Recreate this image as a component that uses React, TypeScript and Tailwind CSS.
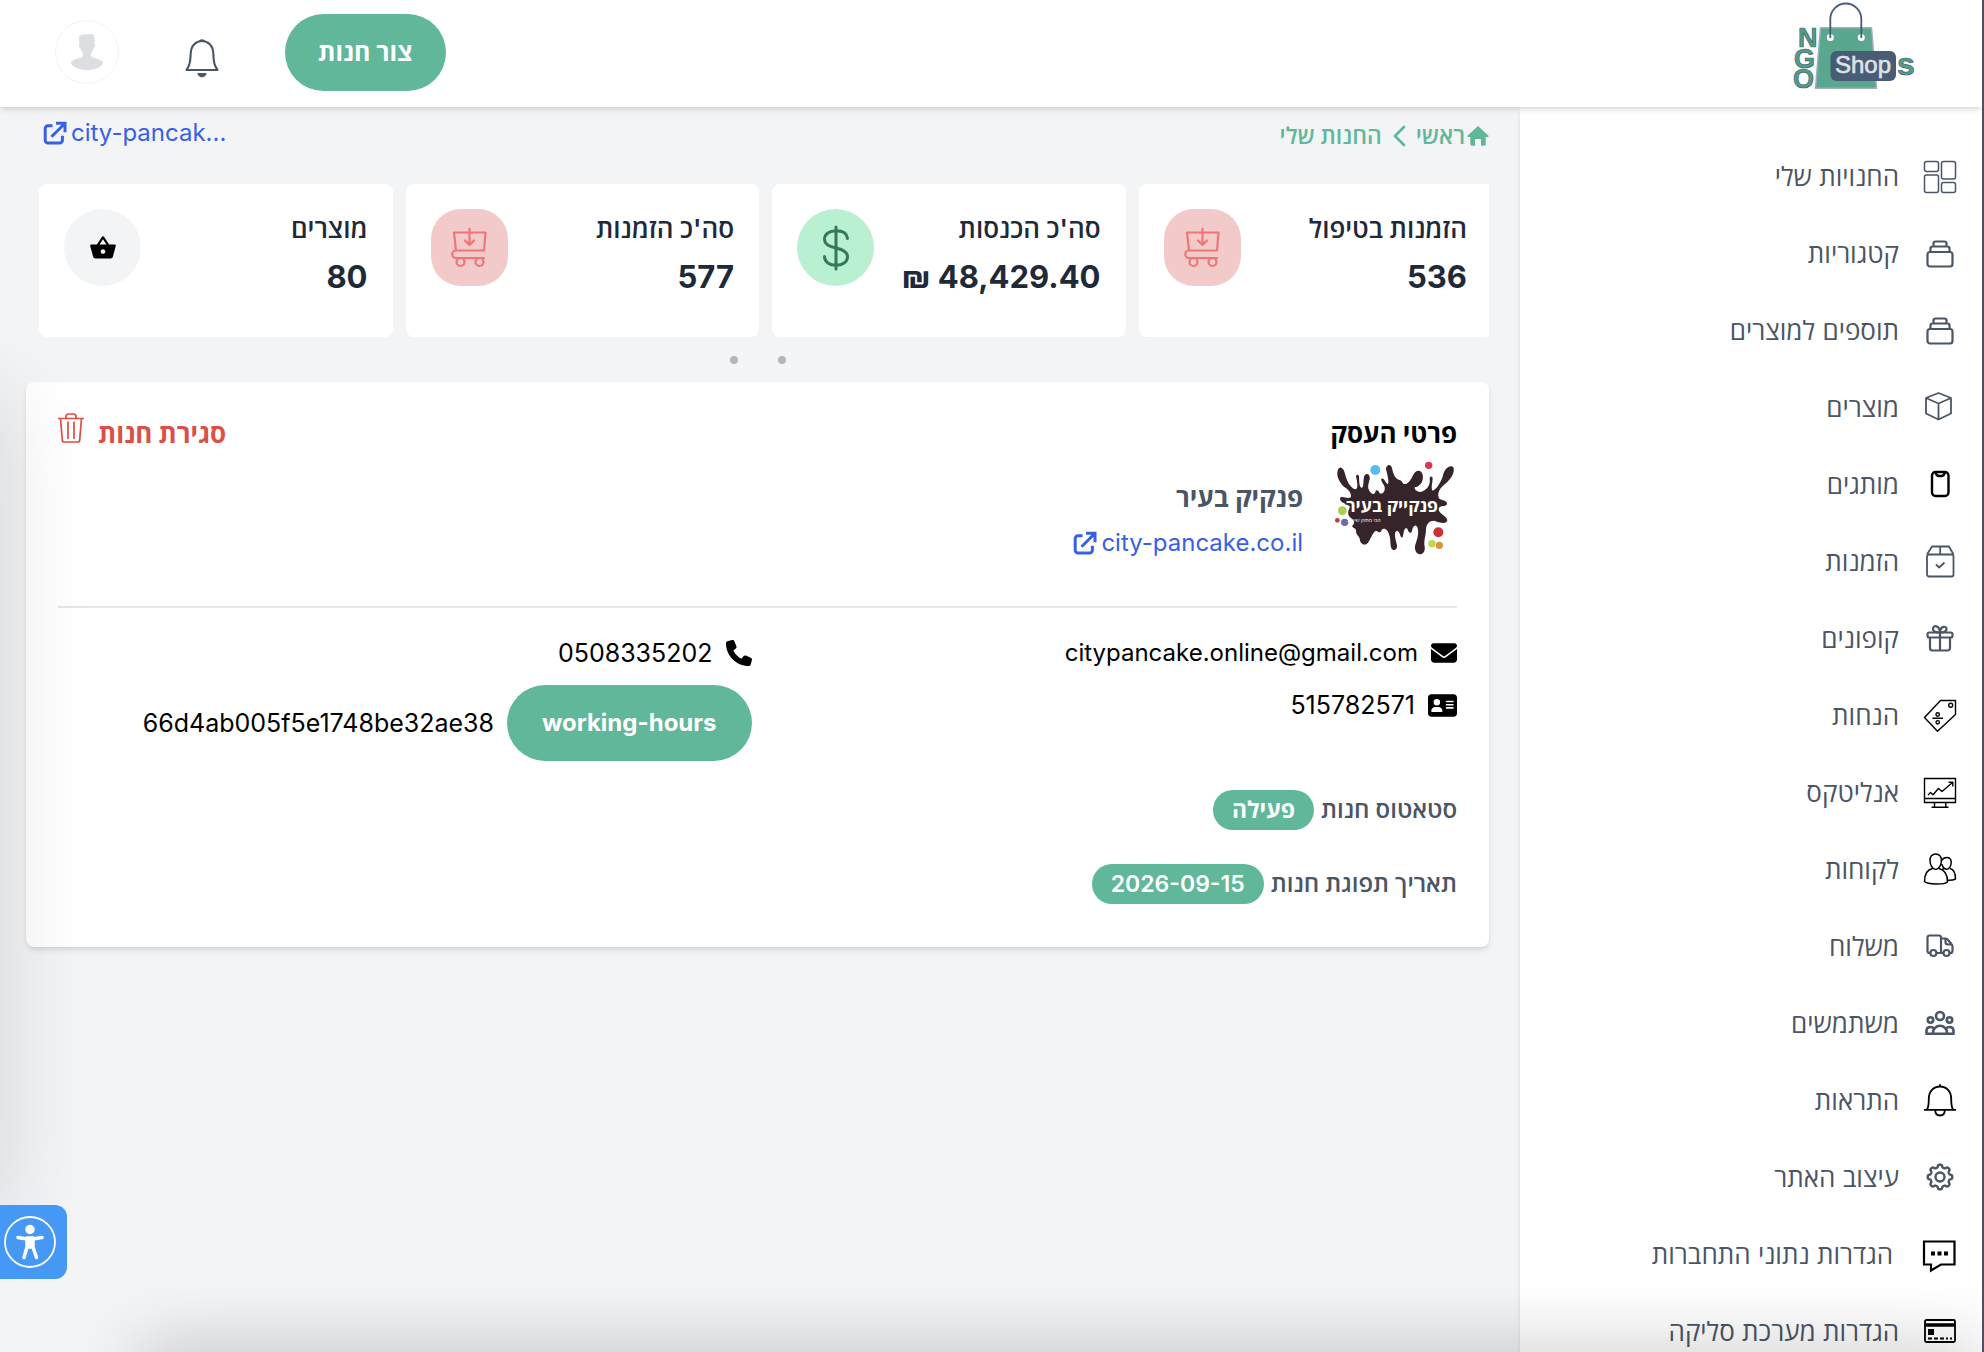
import type { ReactNode } from "react";
import { FaAddressCard, FaEnvelope, FaPhone } from "react-icons/fa6";
import { MdShoppingBasket } from "react-icons/md";

type IconProps = { children: ReactNode; tone?: string; weight?: number };

function Icon({ children, tone = "text-gray-600", weight = 2.2 }: IconProps) {
  return (
    <svg
      viewBox="0 0 32 32"
      className={`size-8 shrink-0 overflow-visible ${tone}`}
      fill="none"
      stroke="currentColor"
      strokeWidth={weight}
      strokeLinejoin="round"
      aria-hidden="true"
    >
      {children}
    </svg>
  );
}

const gearPath = (() => {
  const points: string[] = [];
  for (let i = 0; i <= 160; i++) {
    const a = (i / 160) * Math.PI * 2;
    const wave = Math.tanh(2.2 * Math.cos(8 * a));
    const r = 11 + 1.3 * wave;
    points.push(`${(16 + r * Math.sin(a)).toFixed(2)} ${(15 - r * Math.cos(a)).toFixed(2)}`);
  }
  return `M${points.join("L")}Z`;
})();

const Collection = () => (
  <Icon>
    <path d="M9.500 8V5.500a2 2 0 0 1 2-2h9a2 2 0 0 1 2 2V8M6.500 14v-3.500a2 2 0 0 1 2-2h15a2 2 0 0 1 2 2V14" />
    <rect x="3.500" y="14" width="25" height="14.500" rx="2.500" />
  </Icon>
);

const menu: { label: string; icon: ReactNode; inset?: boolean }[] = [
  {
    label: "החנויות שלי",
    icon: (
      <Icon weight={1.5}>
        <rect x=".5" y=".5" width="14" height="10" rx="2" />
        <rect x=".5" y="14" width="14" height="17.500" rx="2" />
        <rect x="17.500" y=".5" width="14" height="17.500" rx="2" />
        <rect x="17.500" y="21.500" width="14" height="10" rx="2" />
      </Icon>
    ),
  },
  { label: "קטגוריות", icon: <Collection /> },
  { label: "תוספים למוצרים", icon: <Collection /> },
  {
    label: "מוצרים",
    icon: (
      <Icon weight={1.8}>
        <path d="M14.500 1 27 6v15.500L14.500 27.500 2 21.500V6ZM2 6l12.500 5.500L27 6M14.500 11.500v16" />
      </Icon>
    ),
  },
  {
    label: "מותגים",
    icon: (
      <Icon tone="text-black" weight={2.4}>
        <rect x="8" y="3" width="16.500" height="24" rx="3.500" />
        <path d="M11.500 3c.5 2.800 1.500 4 3.500 4h2.500c2 0 3-1.200 3.500-4" />
      </Icon>
    ),
  },
  {
    label: "הזמנות",
    icon: (
      <Icon weight={1.8}>
        <path d="M3 8.500 8 .5h17l4.500 8M16.200 .5v8" />
        <rect x="3" y="8.500" width="26.500" height="22" rx="2" />
        <path d="m12 18.500 3.200 3 5.300-5" />
      </Icon>
    ),
  },
  {
    label: "קופונים",
    icon: (
      <Icon>
        <rect x="3.500" y="9.500" width="25" height="5" rx="1.800" />
        <path d="M6 14.500v10.500a2.500 2.500 0 0 0 2.500 2.500h15a2.500 2.500 0 0 0 2.500-2.500V14.500M16 9.500v18M16 9.500c-5 0-7-1.500-7-3.800 0-3.600 6.500-4 7 3.800Zm0 0c5 0 6.500-1.300 6.500-3.500 0-3.400-6-3.400-6.500 3.500Z" />
      </Icon>
    ),
  },
  {
    label: "הנחות",
    icon: (
      <Icon tone="text-black" weight={1.4}>
        <path d="M31.500 .5h-15L.5 17.500 13.500 31.300 31.500 14.500ZM8.500 18.300H19" />
        <circle cx="26.700" cy="5.300" r="2" />
        <circle cx="13.700" cy="14.500" r="1.700" />
        <circle cx="13.700" cy="22.300" r="1.700" />
      </Icon>
    ),
  },
  {
    label: "אנליטקס",
    icon: (
      <Icon tone="text-black" weight={1.4}>
        <path d="M.5 1.500h31v24H.5ZM.5 21.500h31M10.500 25.500V30M21.800 25.500V30M7.500 30.300h17" />
        <path d="m4 18 2.500-2.500 2.500 2.300 5.500-6.300 3.500 3L28.500 5.500M24.500 5.200h4.300v4.300" />
      </Icon>
    ),
  },
  {
    label: "לקוחות",
    icon: (
      <Icon tone="text-black" weight={1.5}>
        <path d="M11.700 0c3.600 0 5.800 2.600 5.700 6.500-.1 4.400-2.400 9-5.700 9S6.100 10.900 6 6.500C5.900 2.600 8.100 0 11.700 0ZM8.500 14.500C4 15.500.5 18.500.5 27.500c3 3 19.500 3.500 23 .5 0-8.500-3-12.300-8.500-13.500M17.800 6.500c1-2 2.800-3 5-3 2.800 0 4.400 2 4.400 4.800 0 3.800-2 7-4.400 7-2 0-4-2-4.900-5M19.500 14.500l-1.500 1.500M26 14.500c3.500.8 5.500 3.500 5.500 10.500-2 1.200-5 1.500-8.500 1.300" />
      </Icon>
    ),
  },
  {
    label: "משלוח",
    icon: (
      <Icon>
        <path d="M6.200 22H5.500a2 2 0 0 1-2-2V6.500a2 2 0 0 1 2-2H15a2 2 0 0 1 2 2V22h-4.500M17 7.500h4.500a3 3 0 0 1 2.400 1.200l3.800 4.800a3 3 0 0 1 .8 2V20a2 2 0 0 1-2 2H26M17 22h2.200M21.500 8v3a2.500 2.500 0 0 0 2.500 2.500h4" />
        <circle cx="9.400" cy="22" r="3" />
        <circle cx="22.500" cy="22" r="3" />
      </Icon>
    ),
  },
  {
    label: "משתמשים",
    icon: (
      <Icon weight={2.6}>
        <circle cx="16" cy="8" r="4" />
        <circle cx="6.500" cy="12" r="2.700" />
        <circle cx="25.500" cy="12" r="2.700" />
        <path d="M9 25.800v-1c0-4 3-7 7-7s7 3 7 7v1ZM9 25.800H2.500V23c0-2.600 1.600-4 4-4 1.500 0 2.500.5 3.300 1.200M23 25.800h6.500V23c0-2.600-1.600-4-4-4-1.500 0-2.500.5-3.300 1.200" />
      </Icon>
    ),
  },
  {
    label: "התראות",
    icon: (
      <Icon tone="text-black" weight={1.8}>
        <path d="M0 24.800h32M3 24.500c1.500-2 1.800-5 1.800-11C4.800 6.500 9.500 1.500 16 1.500S27.200 6.500 27.200 13.500c0 6 .3 9 1.800 11M16 1.500V-.8M11.200 25c0 3.500 2 5.500 4.800 5.500s4.800-2 4.800-5.500" />
      </Icon>
    ),
  },
  {
    label: "עיצוב האתר",
    icon: (
      <Icon weight={2.4}>
        <path d={gearPath} />
        <circle cx="16" cy="15" r="4.500" />
      </Icon>
    ),
  },
  {
    label: "הגדרות נתוני התחברות",
    inset: true,
    icon: (
      <Icon tone="text-black" weight={2.2}>
        <path d="M0 2.500h30.500v23H17L7 31.500v-6H0Z" strokeLinejoin="miter" />
        <path d="M7 14.500h4M13.500 14.500h4M20 14.500h4" strokeWidth="4" />
      </Icon>
    ),
  },
  {
    label: "הגדרות מערכת סליקה",
    icon: (
      <Icon tone="text-black" weight={1.8}>
        <rect x="1" y="4" width="30" height="22" rx="1.500" />
        <path d="M1 9h30" strokeWidth="3.500" />
        <path d="M4 16h6" strokeWidth="6" />
        <path d="M4 22.500h4M10 22.500h4M16 22.500h4M22 22.500h2M26 22.500h2" />
      </Icon>
    ),
  },
];

const ExternalLink = () => (
  <svg viewBox="0 0 24 24" className="size-6 shrink-0" fill="none" stroke="currentColor" strokeWidth="3" aria-hidden="true">
    <path d="M9.500 4.800H5a2.800 2.800 0 0 0-2.800 2.800v11.600A2.800 2.800 0 0 0 5 22h11.600a2.800 2.800 0 0 0 2.800-2.800v-4.500" strokeLinejoin="round" />
    <path d="M13 2.200h9v9M21.500 2.700 8.500 15.700" />
  </svg>
);

const CartIcon = () => (
  <svg viewBox="0 0 36 40" className="h-10 w-9 text-[#f07575]" fill="none" stroke="currentColor" strokeWidth="2.200" strokeLinejoin="round" strokeLinecap="round" aria-hidden="true">
    <path d="M3 4.500h31.500l-1.500 18H5L3 4.500M18.500 1v15M14 12.500l4.500 4.500 4.500-4.500M33 22.500H5a3.500 3.500 0 0 0 0 7.500h28" />
    <circle cx="9.500" cy="34" r="4" />
    <circle cx="28.500" cy="34" r="4" />
  </svg>
);

const DollarIcon = () => (
  <svg viewBox="0 0 28 46" className="h-12 w-7 text-[#35795d]" fill="none" stroke="currentColor" strokeWidth="3" strokeLinecap="round" aria-hidden="true">
    <path d="M14 2v42M25.500 13.500C25 8.500 20.500 5.800 14 5.800S2.500 9 2.500 14.500c0 4.500 3.500 6.800 11.500 8.500s11.500 4 11.500 8.700c0 5.300-5 8.500-11.500 8.500S2.500 37 2.500 31.500" />
  </svg>
);

const stats = [
  { label: "הזמנות בטיפול", value: "536", badge: "rounded-[30px] bg-[#f3caca]", icon: <CartIcon /> },
  { label: "סה'כ הכנסות", value: "48,429.40 ₪", badge: "rounded-full bg-[#b9f0d2]", icon: <DollarIcon /> },
  { label: "סה'כ הזמנות", value: "577", badge: "rounded-[30px] bg-[#f3caca]", icon: <CartIcon /> },
  { label: "מוצרים", value: "80", badge: "rounded-full bg-gray-100", icon: <MdShoppingBasket className="size-7 text-black" /> },
];

function BrandLogo() {
  return (
    <svg viewBox="0 0 124 92" className="h-[92px] w-[124px]" role="img" aria-label="NGO Shops">
      <path d="M28.500 27.700h51l5 60.500H23.500Z" fill="#5aa78f" stroke="#9fb0b8" strokeWidth="1.500" strokeLinejoin="round" />
      <circle cx="38.300" cy="37.500" r="3.500" fill="#fff" />
      <circle cx="69.300" cy="37.500" r="3.500" fill="#fff" />
      <path d="M38.300 38V19a15.500 15.500 0 0 1 31 0V38" fill="none" stroke="#485c75" strokeWidth="1.800" />
      <g fontFamily="Liberation Sans, sans-serif" fontWeight="700" fontSize="27" fill="#4f9f82" stroke="#485c75" strokeWidth=".7" direction="ltr">
        <text x="6" y="47">N</text>
        <text x="2" y="68">G</text>
        <text x="1" y="88">O</text>
        <text x="105" y="75" fontSize="32">s</text>
      </g>
      <rect x="38.500" y="51" width="65.500" height="30" rx="6" fill="#485c75" />
      <text x="43" y="73" direction="ltr" fontFamily="Liberation Sans, sans-serif" fontSize="24" fill="#dfe3e6" stroke="#dfe3e6" strokeWidth=".6">Shop</text>
    </svg>
  );
}

function StoreLogo() {
  return (
    <svg viewBox="885 180 366 288" className="h-24 w-[122px]" role="img" aria-label="פנקייק בעיר">
      <path
        fill="#35252a"
        d="M893 212C898 194 912 202 916 225C921 248 936 268 948 268C956 262 950 240 948 228C950 222 957 223 957 230C958 245 957 262 966 263C973 260 968 232 975 224C984 218 991 226 989 238C986 252 981 262 988 272C994 282 1003 286 1006 276C1008 268 1014 270 1018 278C1026 286 1036 274 1034 262C1032 252 1021 244 1024 236C1031 232 1036 246 1042 252C1050 250 1041 222 1038 206C1040 192 1053 192 1056 204C1060 226 1068 238 1078 240C1088 240 1086 254 1096 252C1106 250 1112 240 1118 228C1126 208 1144 208 1148 224C1152 246 1138 260 1124 262C1122 270 1136 280 1148 274C1162 268 1172 254 1169 236C1170 226 1178 228 1178 236C1177 252 1172 266 1178 272C1192 268 1206 240 1210 222C1216 200 1236 192 1241 204C1244 222 1230 240 1212 254C1196 268 1190 284 1198 296C1206 302 1222 300 1221 312C1218 322 1200 314 1196 326C1194 340 1220 348 1222 360C1220 376 1196 366 1182 362C1168 362 1158 372 1158 390C1158 408 1150 420 1154 440C1156 456 1148 463 1139 463C1128 462 1122 448 1126 434C1132 416 1138 400 1132 382C1126 370 1118 380 1116 392C1112 404 1106 398 1102 386C1092 380 1092 396 1088 412C1080 416 1082 396 1072 392C1062 394 1064 410 1070 432C1074 446 1066 452 1060 450C1048 446 1054 424 1048 406C1044 388 1030 380 1024 392C1020 402 1014 394 1008 392C998 396 994 414 984 428C976 438 964 434 960 422C960 408 950 408 948 396C950 384 940 386 936 378C946 370 944 362 930 352C920 342 926 330 930 320C924 310 900 310 900 296C904 284 922 300 932 292C936 280 926 270 914 262C900 250 888 230 893 212Z"
      />
      <circle cx="1006" cy="210" r="15" fill="#55bdf0" />
      <circle cx="1166" cy="196" r="11" fill="#dc3550" />
      <circle cx="907" cy="332" r="13" fill="#a8cf4c" />
      <circle cx="892" cy="361" r="7" fill="#c9363c" />
      <circle cx="914" cy="367" r="11" fill="#6b66b0" />
      <circle cx="1195" cy="397" r="15" fill="#cb3237" />
      <circle cx="1176" cy="431" r="11" fill="#c0d84e" />
      <circle cx="1198" cy="436" r="11" fill="#dd9339" />
      <g fontFamily="Open Sans, sans-serif" fill="#fff" direction="rtl">
        <text x="1194" y="336" fontSize="53" fontWeight="700" stroke="#35252a" strokeWidth="8" paintOrder="stroke">פנקייק בעיר</text>
        <text x="1022" y="367" fontSize="16">הכי מתוק שיש...</text>
      </g>
    </svg>
  );
}

const HeaderBell = () => (
  <svg viewBox="0 0 34 40" className="h-10 w-[34px] text-gray-600" fill="none" stroke="currentColor" strokeWidth="2.100" aria-hidden="true">
    <path d="M1.500 32h31c-3-4-3.700-7-4.200-16.500C28 7.500 23 3 17 3S6 7.500 5.700 15.500C5.200 25 4.500 28 1.500 32Z" strokeLinejoin="round" />
    <path d="M14 3.500C14 .5 20 .5 20 3.500ZM12.500 35h9c0 2.500-2 4.300-4.500 4.300s-4.500-1.800-4.500-4.300Z" fill="currentColor" stroke="none" />
  </svg>
);

export default function App() {
  return (
    <div
      dir="rtl"
      className="relative flex h-screen flex-col overflow-hidden border-r-2 border-[#4b5063] bg-gray-100 font-[Inter,'Open_Sans',sans-serif] text-[25px] leading-8 text-black"
    >
      <header className="z-10 flex h-[107px] shrink-0 items-center justify-between bg-white pr-[66px] pb-[3px] pl-[55px] shadow-md">
        <a href="#home" className="self-start">
          <BrandLogo />
        </a>
        <div className="flex items-center gap-[66px]">
          <button className="h-[77px] rounded-full bg-[#61b799] px-[33px] font-bold text-white">צור חנות</button>
          <button aria-label="התראות" className="pt-3">
            <HeaderBell />
          </button>
          <button aria-label="חשבון" className="flex size-16 items-center justify-center rounded-full border border-gray-100">
            <svg viewBox="0 0 32 36" className="h-9 w-8" fill="#dcdee1" aria-hidden="true">
              <path d="M8 3C10-.5 13 .8 22 0c2 3 1.500 6 1.500 9.500 1 1 .5 4-1 5-.5 2-1.500 3.500-2.500 4.500v3c2 3 12 2.500 12 7.500-2 4-9 6.500-16 6.500S2 33.500 0 29.500C0 24.500 10 25 12 22v-3c-1-1-2-2.500-2.500-4.500-1.500-1-2-4-1-5C8 7 7.500 5 8 3Z" />
            </svg>
          </button>
        </div>
      </header>

      <div className="flex min-h-0 flex-1">
        <nav aria-label="תפריט ראשי" className="w-[462px] shrink-0 bg-white pt-[31px] shadow-md">
          <ul>
            {menu.map(({ label, icon, inset }) => (
              <li key={label}>
                <a href="#menu" className="flex h-[77px] items-center gap-[25px] pr-[26px] text-[26px] text-gray-600">
                  {icon}
                  <span className={inset ? "pr-[6px]" : ""}>{label}</span>
                </a>
              </li>
            ))}
          </ul>
        </nav>

        <main className="min-w-0 flex-1 pr-[31px] pl-[26px]">
          <div className="flex h-[77px] items-start justify-between pt-[10px] pl-[17px]">
            <div className="flex items-center pt-[3px] text-[23px] font-semibold text-[#61b799]">
              <a href="#main" className="flex items-center gap-[2px]">
                <svg viewBox="0 0 22 22" className="size-[22px]" fill="currentColor" aria-hidden="true">
                  <path d="M11 1 .7 10.500c-.6.600-.2 1.500.6 1.500h2V19c0 1 .6 1.700 1.700 1.700h3V15c0-.6.4-1 1-1h4c.6 0 1 .4 1 1v5.700h3c1.100 0 1.700-.7 1.700-1.700v-7h2c.8 0 1.200-.9.6-1.500Z" />
                </svg>
                ראשי
              </a>
              <svg viewBox="0 0 14 22" className="mx-[10px] h-[22px] w-[14px]" fill="none" stroke="currentColor" strokeWidth="2.800" strokeLinecap="round" strokeLinejoin="round" aria-hidden="true">
                <path d="M12 2 3 11l9 9" />
              </svg>
              <a href="#store">החנות שלי</a>
            </div>
            <a href="#site" dir="ltr" className="flex items-center gap-1 text-[24px] text-[#3760e4]">
              <ExternalLink />
              city-pancak...
            </a>
          </div>

          <section className="overflow-hidden pl-[13px]">
            <div className="-mr-[3px] grid grid-cols-4 gap-[13px]">
              {stats.map(({ label, value, badge, icon }) => (
                <article key={label} className="flex h-[153px] items-start justify-between rounded-lg bg-white py-[25px] pr-[25px] pl-[25px] text-gray-800">
                  <div>
                    <h3 className="pt-1 text-[26px] font-semibold">{label}</h3>
                    <p className="pt-4 text-[31px] font-bold">{value}</p>
                  </div>
                  <div className={`flex size-[77px] shrink-0 items-center justify-center ${badge}`}>{icon}</div>
                </article>
              ))}
            </div>
          </section>

          <div className="flex h-[45px] items-center justify-center gap-10">
            <button aria-label="עמוד 1" className="size-2 rounded-full bg-[#b5b6b8]" />
            <button aria-label="עמוד 2" className="size-2 rounded-full bg-[#b5b6b8]" />
          </div>

          <section className="rounded-lg bg-white px-8 pt-[31px] pb-[43px] shadow-md">
            <div className="flex items-start justify-between text-[26px]">
              <h2 className="pt-[5px] font-bold">פרטי העסק</h2>
              <button className="flex items-start gap-[14px] font-bold text-[#dc4f48]">
                <span className="pt-[5px]">סגירת חנות</span>
                <svg viewBox="0 0 26 30" className="h-[30px] w-[26px]" fill="none" stroke="currentColor" strokeWidth="1.700" strokeLinejoin="round" aria-hidden="true">
                  <path d="M0 5.500h26M8 5.500V3.500C8 2 9 1 10.500 1h5C17 1 18 2 18 3.500v2M2.500 5.500l1.800 21.500a2 2 0 0 0 2 2h13.400a2 2 0 0 0 2-2l1.800-21.500M10 8.500V26M16 8.500V26" />
                </svg>
              </button>
            </div>
            <div className="flex items-start gap-8 border-b-2 border-gray-200 pt-[10px] pb-[47px]">
              <StoreLogo />
              <div className="pt-[22px]">
                <p className="text-[26px] font-bold text-gray-600">פנקיק בעיר</p>
                <a href="#site" dir="ltr" className="flex items-center gap-1 pt-[13px] text-[24px] text-[#3760e4]">
                  <ExternalLink />
                  city-pancake.co.il
                </a>
              </div>
            </div>

            <div className="grid grid-cols-2 gap-x-3 pt-[29px]">
              <div className="flex flex-col gap-5">
                <div className="flex items-center gap-[13px]">
                  <FaEnvelope className="size-[26px]" />
                  <a href="#mail" className="text-[24px]">citypancake.online@gmail.com</a>
                </div>
                <div className="flex items-center gap-[13px]">
                  <FaAddressCard className="size-[29px]" />
                  <span>515782571</span>
                </div>
              </div>
              <div>
                <div className="flex items-center gap-[13px]">
                  <FaPhone className="size-[26px]" />
                  <span>0508335202</span>
                </div>
                <div className="flex items-center gap-[13px] pt-4">
                  <button className="h-[76px] rounded-full bg-[#61b799] px-[35px] text-[24px] font-bold text-white">working-hours</button>
                  <span>66d4ab005f5e1748be32ae38</span>
                </div>
              </div>
            </div>

            <p className="flex items-center gap-[7px] pt-[29px] text-[24px] font-semibold text-gray-600">
              סטאטוס חנות
              <span className="flex h-10 items-center rounded-full bg-[#61b799] px-[19px] text-[23px] font-bold text-white">פעילה</span>
            </p>
            <p className="flex items-center gap-[7px] pt-[34px] text-[24px] font-semibold text-gray-600">
              תאריך תפוגת חנות
              <span dir="ltr" className="flex h-10 items-center rounded-full bg-[#61b799] px-[19px] text-[23px] font-semibold text-white">2026-09-15</span>
            </p>
          </section>
        </main>
      </div>

      <div className="pointer-events-none absolute top-[400px] -left-20 z-20 h-[820px] w-20 shadow-[0_0_90px_5px_rgba(0,0,0,0.12)]" />
      <div className="pointer-events-none absolute right-0 -bottom-10 left-[140px] z-20 h-10 shadow-[0_0_70px_0_rgba(0,0,0,0.28)]" />

      <button aria-label="נגישות" className="absolute top-[1205px] left-0 z-30 flex h-[74px] w-[67px] items-center justify-center rounded-r-xl bg-[#4598f3] pr-[7px]">
        <svg viewBox="0 0 52 52" className="size-[52px]" fill="none" stroke="#fff" aria-hidden="true">
          <circle cx="26" cy="26" r="25" strokeWidth="1.800" />
          <circle cx="26" cy="13.500" r="4.700" fill="#fff" stroke="none" />
          <path d="M14 21.500c8 1.800 16 1.800 24 0" strokeWidth="3.500" strokeLinecap="round" />
          <path d="M23 22h6v9l3.500 10.500M29 31h-6l-3 10.500M23 22v10" strokeWidth="3.500" strokeLinecap="round" strokeLinejoin="round" />
          <path d="M23 22h6v10h-6Z" fill="#fff" stroke="none" />
        </svg>
      </button>
    </div>
  );
}
